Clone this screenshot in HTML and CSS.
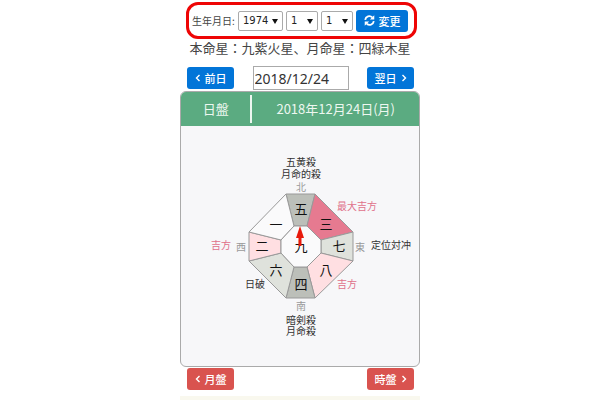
FILE: index.html
```
<!DOCTYPE html>
<html lang="ja">
<head>
    <meta charset="utf-8">
    <title>日盤</title>
    <link rel="stylesheet" href="styles.css">
</head>
<body>
    <main class="page">
        <form class="birth-form">
            <label for="birth-year">生年月日:</label>
            <span class="select year">
                <select id="birth-year">
                    <option>1973</option>
                    <option selected>1974</option>
                    <option>1975</option>
                </select>
            </span>
            <span class="select">
                <select aria-label="月">
                    <option>1</option>
                    <option>2</option>
                </select>
            </span>
            <span class="select">
                <select aria-label="日">
                    <option>1</option>
                    <option>2</option>
                </select>
            </span>
            <button type="button" class="btn btn-blue">
                <svg class="refresh" viewBox="0 0 12 12" aria-hidden="true">
                    <path d="M1.3 5.2A4.5 4.5 0 0 1 9 2.7M10.7 6.8A4.5 4.5 0 0 1 3 9.3" fill="none" stroke="#fff" stroke-width="2"/>
                    <path d="M11.2 .4V5H6.4zM.8 11.6V7h4.8z" fill="#fff"/>
                </svg>
                変更
            </button>
        </form>

        <p class="stars">本命星：九紫火星、月命星：四緑木星</p>

        <div class="nav-row">
            <button type="button" class="btn btn-blue">
                <svg class="chevron" viewBox="0 0 6 8" aria-hidden="true"><path d="M4.5 1 1.5 4l3 3"/></svg>
                前日
            </button>
            <input type="text" class="date-input" value="2018/12/24" aria-label="日付">
            <button type="button" class="btn btn-blue">
                翌日
                <svg class="chevron" viewBox="0 0 6 8" aria-hidden="true"><path d="M1.5 1l3 3-3 3"/></svg>
            </button>
        </div>

        <section class="board">
            <header class="board-head">
                <span class="board-name">日盤</span>
                <span class="board-date">2018年12月24日(月)</span>
            </header>
            <svg class="chart" viewBox="0 0 238 240">
                <!-- eight directions -->
                <g class="cells">
                    <path class="dark" d="M105 68h29l-8 32h-13z"/>
                    <path class="best" d="M134 68l38 38-32 8-14-14z"/>
                    <path class="gray" d="M172 106v29l-32-8v-13z"/>
                    <path class="lucky" d="M172 135l-38 37-8-31 14-14z"/>
                    <path class="dark" d="M134 172h-29l8-31h13z"/>
                    <path class="gray" d="M105 172l-37-37 32-8 13 14z"/>
                    <path class="lucky" d="M68 135v-29l32 8v13z"/>
                    <path class="plain" d="M68 106l37-38 8 32-13 14z"/>
                    <path class="center" d="M113 100h13l14 14v13l-14 14h-13l-13-14v-13z"/>
                </g>
                <g class="numbers">
                    <text x="120" y="88">五</text>
                    <text x="145" y="103">三</text>
                    <text x="158" y="125">七</text>
                    <text x="145" y="149">八</text>
                    <text x="120" y="163">四</text>
                    <text x="95" y="149">六</text>
                    <text x="81" y="125">二</text>
                    <text x="95" y="103">一</text>
                    <text x="120" y="125">九</text>
                </g>
                <path class="needle" d="M119 100l4 12h-2.500v8h-3v-8H115z"/>
                <g class="compass">
                    <text x="120" y="65">北</text>
                    <text x="179" y="125">東</text>
                    <text x="120" y="184">南</text>
                    <text x="60" y="125">西</text>
                </g>
                <g class="notes">
                    <text x="120" y="40">五黄殺</text>
                    <text x="120" y="52">月命的殺</text>
                    <text x="210" y="123">定位対冲</text>
                    <text x="74" y="162">日破</text>
                    <text x="120" y="198">暗剣殺</text>
                    <text x="120" y="209">月命殺</text>
                </g>
                <g class="notes good">
                    <text x="176" y="84">最大吉方</text>
                    <text x="40" y="123">吉方</text>
                    <text x="166" y="162">吉方</text>
                </g>
            </svg>
        </section>

        <div class="nav-row nav-bottom">
            <button type="button" class="btn btn-red">
                <svg class="chevron" viewBox="0 0 6 8" aria-hidden="true"><path d="M4.5 1 1.5 4l3 3"/></svg>
                月盤
            </button>
            <button type="button" class="btn btn-red">
                時盤
                <svg class="chevron" viewBox="0 0 6 8" aria-hidden="true"><path d="M1.5 1l3 3-3 3"/></svg>
            </button>
        </div>

        <div class="next-block"></div>
    </main>
</body>
</html>
```
FILE: styles.css
```
:root {
    --blue: #0275d8;
    --red: #d9534f;
    --green: #5bab81;
    --panel: #f7f7f9;
    --line: #aaaaaa;
    --text: #444444;
}

* {
    box-sizing: border-box;
}

body {
    margin: 0;
    background-color: #fff;
    color: var(--text);
    font-family: "Noto Sans CJK JP", sans-serif;
    overflow: hidden;
}

.page {
    width: 40%;
    min-width: 240px;
    margin: 0 auto;
    padding-top: 2px;
}

.birth-form {
    display: flex;
    align-items: center;
    gap: 3px;
    height: 37px;
    margin: 0 3px 0 6px;
    padding: 0 3px;
    border: 3px solid #ee0505;
    border-radius: 12px;
}

.birth-form label {
    flex: 1;
    font-size: 10px;
    white-space: nowrap;
}

.birth-form .btn {
    width: 52px;
    margin-right: 3px;
}

.select {
    position: relative;
    width: 32px;
}

.select.year {
    width: 45px;
}

.select select {
    display: block;
    width: 100%;
    height: 20px;
    padding: 0 4px;
    appearance: none;
    border: 1px solid var(--line);
    border-radius: 2px;
    background-color: #fff;
    color: #222;
    font-family: "DejaVu Sans", sans-serif;
    font-size: 10px;
}

.select::after {
    content: "";
    position: absolute;
    top: 8px;
    right: 5px;
    border: 3px solid transparent;
    border-top: 5px solid #111;
    border-bottom: 0;
    pointer-events: none;
}

.btn {
    display: flex;
    align-items: center;
    justify-content: center;
    gap: 4px;
    width: 47px;
    height: 22px;
    padding: 0;
    border: none;
    border-radius: 3px;
    color: #fff;
    font-family: inherit;
    font-size: 11px;
    font-weight: 500;
    line-height: 20px;
    white-space: nowrap;
    cursor: pointer;
}

.btn-blue {
    background-color: var(--blue);
}

.btn-red {
    background-color: var(--red);
}

.refresh {
    width: 11px;
    height: 11px;
}

.chevron {
    width: 6px;
    height: 8px;
    fill: none;
    stroke: #fff;
    stroke-width: 1.4;
}

.stars {
    display: flex;
    justify-content: center;
    margin: 0;
    font-size: 13px;
    line-height: 18px;
    white-space: nowrap;
}

.nav-row {
    display: flex;
    align-items: center;
    justify-content: space-between;
    margin-top: 9px;
    padding: 0 6px 0 7px;
}

.date-input {
    width: 96px;
    height: 24px;
    padding: 0 1px;
    border: 1px solid var(--line);
    color: #333;
    font-family: "Noto Sans", sans-serif;
    font-size: 14px;
}

.board {
    margin-top: 1px;
    border: 1px solid var(--line);
    border-radius: 6px;
    background-color: var(--panel);
    overflow: hidden;
}

.board-head {
    display: flex;
    padding: 3px 0;
    background-color: var(--green);
    color: #edf7f0;
    font-size: 13px;
    line-height: 28px;
    text-align: center;
}

.board-name {
    width: 30%;
    border-right: 2px solid #edf7f0;
}

.board-date {
    flex: 1;
}

.chart {
    display: block;
    width: 100%;
}

.chart text {
    text-anchor: middle;
}

.cells path {
    stroke: #999;
    stroke-width: 1;
}

.cells .dark {
    fill: #bcbfb9;
}

.cells .gray {
    fill: #dfe2dc;
}

.cells .best {
    fill: #e67a90;
}

.cells .lucky {
    fill: #ffdfe2;
}

.cells .plain,
.cells .center {
    fill: #fafafb;
}

.numbers {
    fill: #111;
    font-size: 13px;
}

.needle {
    fill: #e8190b;
}

.compass {
    fill: #999;
    font-size: 10px;
}

.notes {
    fill: #333;
    font-size: 10px;
}

.notes.good {
    fill: #e0708a;
}

.nav-bottom {
    margin-top: 1px;
}

.next-block {
    height: 12px;
    margin-top: 6px;
    background-color: #f9f8ee;
}
```
